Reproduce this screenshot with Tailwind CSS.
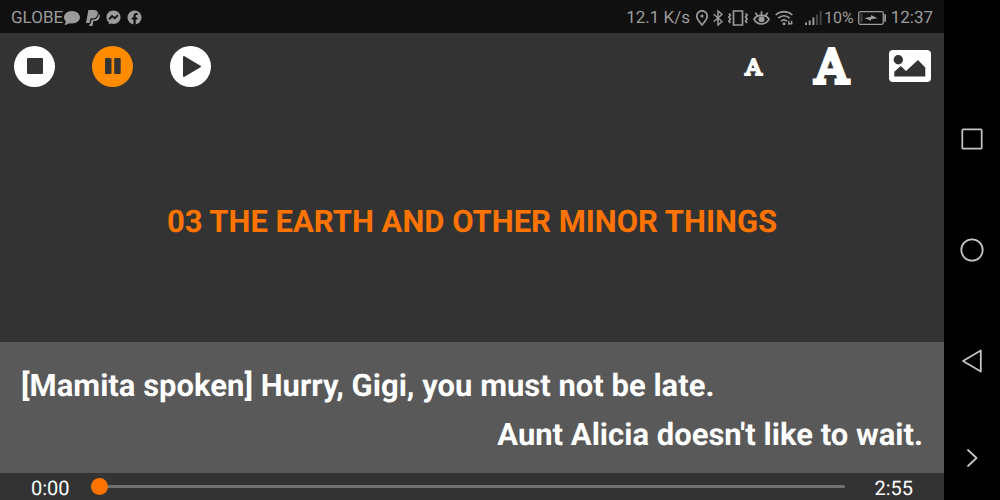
<!DOCTYPE html>
<html lang="en">
<head>
    <meta charset="UTF-8">
    <meta name="viewport" content="width=device-width, initial-scale=1.0">
    <title>03 The Earth and Other Minor Things</title>
    <script src="https://cdn.jsdelivr.net/npm/@tailwindcss/browser@4"></script>
</head>
<body class="flex h-screen overflow-hidden bg-black font-[Roboto,sans-serif] text-white [text-rendering:geometricPrecision]">

    <main class="flex min-w-0 flex-1 flex-col bg-[#333333]">

        <!-- Status bar -->
        <header class="flex h-[33px] shrink-0 items-center justify-between bg-[#101010] pt-[2px] pr-[11px] pl-[11px] text-[17px] leading-5 text-[#9b9b9b]">
            <div class="flex items-center">
                <span class="text-[17px]">GLOBE</span>
                <svg class="ml-px h-4 w-4" viewBox="0 0 16 16" fill="currentColor" aria-hidden="true">
                    <path d="M8 1C3.600 1 0 3.800 0 7.300c0 1.600.700 3 1.900 4.100C1.700 12.700.900 13.900.200 14.700c2.100.200 3.900-.600 5.100-1.500.900.200 1.700.300 2.700.300 4.400 0 8-2.800 8-6.200S12.400 1 8 1z"/>
                </svg>
                <svg class="ml-[6px] h-4 w-[14px]" viewBox="0 0 14 16" fill="currentColor" aria-hidden="true">
                    <path d="M2.400 0h5.800c2.500 0 4 1.500 3.500 4-.500 3-2.500 4.600-5.400 4.600H4.500L3.600 13H0z"/>
                    <path d="M12.700 3.600c1 .800 1.300 2 1 3.400-.500 2.700-2.400 4-5 4H7.400l-1 5H3.200l.400-2h.900l1-4.300h1.300c3.200 0 5.500-1.800 5.900-6.100z"/>
                </svg>
                <svg class="ml-[6px] h-[15px] w-[15px]" viewBox="0 0 15 15" aria-hidden="true">
                    <path fill="currentColor" d="M7.500.500C3.500.500.500 3.400.500 7.200c0 2 .800 3.700 2.200 4.900l.200 2.300 2-.9c.800.200 1.700.400 2.600.400 4 0 7-2.900 7-6.700s-3-6.700-7-6.700z"/>
                    <path fill="none" stroke="#101010" stroke-width="1.800" d="M3.200 9.300 6 6.100l2.700 2.200 3.200-3.200"/>
                </svg>
                <svg class="ml-[6px] h-[15px] w-[15px]" viewBox="0 0 15 15" aria-hidden="true">
                    <circle cx="7.500" cy="7.500" r="7" fill="currentColor"/>
                    <path fill="#101010" d="M6.500 15V9.600H4.700V7.400h1.800V5.900c0-1.900 1.100-2.900 2.700-2.900.700 0 1.400.100 1.400.100V5h-.8c-.900 0-1.100.500-1.100 1.100v1.300h1.900l-.3 2.200H8.700V15z"/>
                </svg>
            </div>

            <div class="flex items-center">
                <span>12.1 K/s</span>
                <svg class="ml-[6px] h-4 w-3" viewBox="0 0 12 16" fill="none" stroke="currentColor" stroke-width="1.700" aria-hidden="true">
                    <path d="M6 15C3.500 12 .800 9.200.800 6a5.200 5.200 0 0 1 10.400 0c0 3.200-2.700 6-5.200 9z"/>
                    <circle cx="6" cy="6" r="1.600" fill="currentColor" stroke="none"/>
                </svg>
                <svg class="ml-[5px] h-4 w-[10px]" viewBox="0 0 10 16" fill="none" stroke="currentColor" stroke-width="1.500" aria-hidden="true">
                    <path d="M.700 4.200 9 11.500 5 15V1l4 3.500-8.300 7.300"/>
                </svg>
                <svg class="ml-[5px] h-4 w-[20px]" viewBox="0 0 20 16" fill="none" stroke="currentColor" stroke-width="1.700" aria-hidden="true">
                    <path d="M5.500 1h9v14h-9z"/>
                    <path d="M.900 3.500l1.500 1.500-1.500 2 1.500 2-1.500 2 1.500 2M17.600 3.500l1.500 1.500-1.500 2 1.500 2-1.500 2 1.500 2"/>
                </svg>
                <svg class="ml-[5px] h-4 w-[17px]" viewBox="0 0 17 16" fill="none" stroke="currentColor" stroke-width="1.700" aria-hidden="true">
                    <path d="M1 9.200C4.200 4.200 12.800 4.200 16 9.200c-3.200 6.400-11.800 6.400-15 0z"/>
                    <path d="M8.500 5.200V1.200M4.400 5.700 2.400 2.800M12.600 5.700l2-2.900"/>
                    <circle cx="8.500" cy="9.200" r="3" fill="currentColor" stroke="none"/>
                </svg>
                <svg class="ml-[5px] h-4 w-[18px]" viewBox="0 0 18 16" fill="none" stroke="currentColor" stroke-width="1.700" aria-hidden="true">
                    <path d="M.700 5C5.500.500 12.500.500 17.300 5M3.300 8.200c3.400-3.200 8-3.200 11.400 0M6 11.200c1.800-1.600 4.200-1.600 6 0"/>
                    <circle cx="9" cy="13.800" r="1.500" fill="currentColor" stroke="none"/>
                    <path stroke-width="1.400" d="M13.800 10.800v4M13.800 13.800H16.700v-3"/>
                </svg>
                <svg class="ml-[12px] h-4 w-[18px]" viewBox="0 0 18 16" fill="currentColor" aria-hidden="true">
                    <path d="M0 12.500h2V15H0zM3.700 10.500h2V15h-2zM7.400 7.500h2V15h-2z"/>
                    <path fill="#454545" d="M11 4.500h2V15h-2zM14.700 1h2v14h-2z"/>
                </svg>
                <span class="ml-[1px] text-[16px]">10%</span>
                <svg class="ml-[4px] h-[14px] w-7" viewBox="0 0 28 14" aria-hidden="true">
                    <rect x=".700" y=".700" width="24.600" height="12.600" rx="1.500" fill="none" stroke="currentColor" stroke-width="1.300"/>
                    <path fill="#454545" d="M2.500 2.500h2v9h-2z"/>
                    <path fill="currentColor" d="M26.300 3.200H28v7.600h-1.700zM6.500 7l6.500-1.200V4l6.500 3.200-6.500 1V10z"/>
                </svg>
                <time class="ml-[5px] text-[17px]">12:37</time>
            </div>
        </header>

        <!-- Playback and display controls -->
        <nav class="flex h-[66px] shrink-0 items-center justify-between px-[14px]">
            <div class="flex items-center gap-[37px]">
                <button type="button" aria-label="Stop" class="flex size-[41px] items-center justify-center rounded-full bg-white text-[#333333]">
                    <svg class="size-4" viewBox="0 0 16 16" fill="currentColor"><rect width="16" height="16" rx="1"/></svg>
                </button>
                <button type="button" aria-label="Pause" class="flex size-[41px] items-center justify-center rounded-full bg-[#ff8c00] text-[#333333]">
                    <svg class="size-4" viewBox="0 0 16 16" fill="currentColor"><rect width="6.500" height="16" rx="1"/><rect x="9.200" width="6.500" height="16" rx="1"/></svg>
                </button>
                <button type="button" aria-label="Play" class="flex size-[41px] items-center justify-center rounded-full bg-white text-[#333333]">
                    <svg class="size-[41px]" viewBox="0 0 41 41" fill="currentColor" stroke="currentColor" stroke-width="2" stroke-linejoin="round"><path d="M14 11v19l16-9.500z"/></svg>
                </button>
            </div>
            <div class="flex items-center gap-[37px] font-['DejaVu_Serif',serif]">
                <button type="button" aria-label="Smaller text" class="flex size-[41px] items-center justify-center pt-[2px] text-[23px] leading-none [-webkit-text-stroke:2px_white]">A</button>
                <button type="button" aria-label="Larger text" class="flex size-[41px] items-center justify-center pt-[2px] text-[46px] leading-none [-webkit-text-stroke:4px_white]">A</button>
                <button type="button" aria-label="Background picture" class="flex size-[41px] items-center justify-center">
                    <svg class="h-8 w-[42px] shrink-0" viewBox="0 0 42 32">
                        <rect width="42" height="32" rx="4" fill="#fff"/>
                        <circle cx="9.300" cy="9.700" r="4.700" fill="#333333"/>
                        <path fill="#333333" d="M5.300 26.500v-4.700l6.500-5.800 5.200 5L29 10l7.300 7.500v9z"/>
                    </svg>
                </button>
            </div>
        </nav>

        <section class="flex min-h-0 flex-1 items-center justify-center pt-[2px]">
            <h1 class="text-[31px] leading-9 font-bold text-[#ff7300]">03 THE EARTH AND OTHER MINOR THINGS</h1>
        </section>

        <!-- Lyrics -->
        <section class="flex shrink-0 flex-col gap-[13px] bg-[#595959] px-[21px] pt-[26px] pb-5 text-[31px] leading-9 font-bold">
            <p>[Mamita spoken] Hurry, Gigi, you must not be late.</p>
            <p class="text-right">Aunt Alicia doesn't like to wait.</p>
        </section>

        <footer class="flex h-[27px] shrink-0 items-center bg-[#333333] pr-[31px] pl-[31px] text-[20px] leading-6">
            <label for="seek" class="w-[60px] pt-[2px]">0:00</label>
            <input id="seek" type="range" min="0" max="175" value="0"
                class="h-[18px] min-w-0 flex-1 appearance-none bg-transparent [&::-webkit-slider-runnable-track]:h-[3px] [&::-webkit-slider-runnable-track]:rounded-full [&::-webkit-slider-runnable-track]:bg-[#707070] [&::-webkit-slider-thumb]:-mt-[7px] [&::-webkit-slider-thumb]:size-[17px] [&::-webkit-slider-thumb]:appearance-none [&::-webkit-slider-thumb]:rounded-full [&::-webkit-slider-thumb]:bg-[#ff7300]">
            <output for="seek" class="w-[68px] pt-[2px] text-right">2:55</output>
        </footer>
    </main>

    <!-- System navigation -->
    <aside class="flex w-14 shrink-0 flex-col items-center justify-between pt-[127px] pb-[30px] text-[#c4c4c4]">
        <div class="flex flex-col gap-[87px]">
            <button type="button" aria-label="Recent apps">
                <svg class="size-6" viewBox="0 0 24 24" fill="none" stroke="currentColor" stroke-width="1.700"><rect x="2.300" y="2.300" width="19.400" height="19.400" rx="1"/></svg>
            </button>
            <button type="button" aria-label="Home">
                <svg class="size-6" viewBox="0 0 24 24" fill="none" stroke="currentColor" stroke-width="1.800"><circle cx="12" cy="12" r="10.700"/></svg>
            </button>
            <button type="button" aria-label="Back">
                <svg class="size-6" viewBox="0 0 24 24" fill="none" stroke="currentColor" stroke-width="1.800" stroke-linejoin="round"><path d="M20.800 1.500v21L3 12z"/></svg>
            </button>
        </div>
        <button type="button" aria-label="Hide navigation bar">
            <svg class="size-6" viewBox="0 0 24 24" fill="none" stroke="currentColor" stroke-width="1.800" stroke-linecap="round" stroke-linejoin="round"><path d="M8 4l8.500 8L8 20"/></svg>
        </button>
    </aside>

</body>
</html>
